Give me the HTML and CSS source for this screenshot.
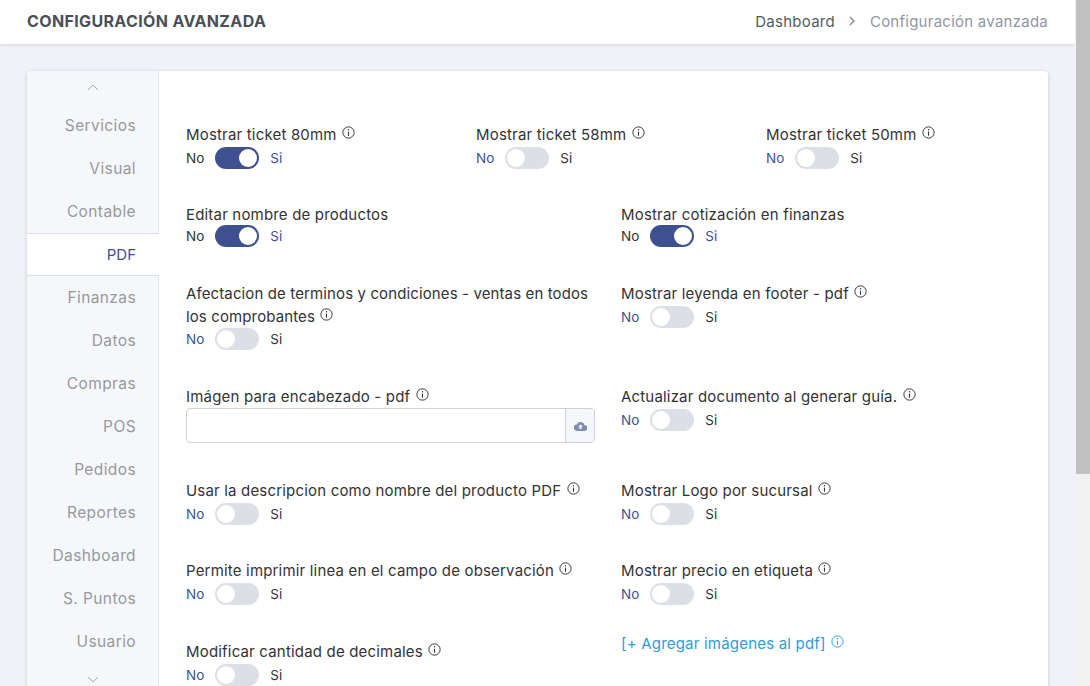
FILE: index.html
```html
<!DOCTYPE html>
<html lang="es">
    <head>
        <meta charset="UTF-8" />
        <meta name="viewport" content="width=device-width, initial-scale=1.0" />
        <title>Configuración avanzada</title>
        <link rel="stylesheet" href="styles.css">
    </head>
    <body>
        <svg class="defs" width="0" height="0">
            <symbol id="info" viewBox="0 0 12 12">
                <circle cx="6" cy="6" r="5.2" fill="none" stroke="currentColor" stroke-width="0.9"></circle>
                <path d="M6 5.2V9" fill="none" stroke="currentColor" stroke-width="1"></path>
                <circle cx="6" cy="3.4" r=".7" fill="currentColor"></circle>
            </symbol>
        </svg>
        <div class="page">
            <header class="topbar">
                <h1 class="title">CONFIGURACIÓN AVANZADA</h1>
                <nav class="crumbs">
                    <span>Dashboard</span>
                    <svg class="crumb-sep" viewBox="0 0 8 10" width="8" height="10"><path d="M2 1l4 4-4 4" fill="none" stroke="currentColor" stroke-width="1.2"></path></svg>
                    <span class="crumb-current">Configuración avanzada</span>
                </nav>
            </header>
            <main class="content">
                <section class="card">
                    <aside class="tabs">
                        <div class="tab-arrow"><svg viewBox="0 0 12 7" width="12" height="7"><path d="M1 6l5-5 5 5" fill="none" stroke="currentColor"></path></svg></div>
                        <div class="tab">Servicios</div>
                        <div class="tab">Visual</div>
                        <div class="tab">Contable</div>
                        <div class="tab active">PDF</div>
                        <div class="tab">Finanzas</div>
                        <div class="tab">Datos</div>
                        <div class="tab">Compras</div>
                        <div class="tab">POS</div>
                        <div class="tab">Pedidos</div>
                        <div class="tab">Reportes</div>
                        <div class="tab">Dashboard</div>
                        <div class="tab">S. Puntos</div>
                        <div class="tab">Usuario</div>
                        <div class="tab-arrow"><svg viewBox="0 0 12 7" width="12" height="7"><path d="M1 1l5 5 5-5" fill="none" stroke="currentColor"></path></svg></div>
                    </aside>
                    <div class="panel">
                        <div class="row thirds">
                            <div class="field">
                                <label class="label">Mostrar ticket 80mm <svg class="info"><use href="#info"></use></svg></label>
                                <div class="switch on"><span class="side">No</span><span class="track"></span><span class="side">Si</span></div>
                            </div>
                            <div class="field">
                                <label class="label">Mostrar ticket 58mm <svg class="info"><use href="#info"></use></svg></label>
                                <div class="switch"><span class="side">No</span><span class="track"></span><span class="side">Si</span></div>
                            </div>
                            <div class="field">
                                <label class="label">Mostrar ticket 50mm <svg class="info"><use href="#info"></use></svg></label>
                                <div class="switch"><span class="side">No</span><span class="track"></span><span class="side">Si</span></div>
                            </div>
                        </div>
                        <div class="row halves">
                            <div class="field">
                                <label class="label">Editar nombre de productos</label>
                                <div class="switch on"><span class="side">No</span><span class="track"></span><span class="side">Si</span></div>
                            </div>
                            <div class="field">
                                <label class="label">Mostrar cotización en finanzas</label>
                                <div class="switch on"><span class="side">No</span><span class="track"></span><span class="side">Si</span></div>
                            </div>
                        </div>
                        <div class="row halves">
                            <div class="field">
                                <label class="label wrap">Afectacion de terminos y condiciones - ventas en todos los comprobantes <svg class="info"><use href="#info"></use></svg></label>
                                <div class="switch"><span class="side">No</span><span class="track"></span><span class="side">Si</span></div>
                            </div>
                            <div class="field">
                                <label class="label">Mostrar leyenda en footer - pdf <svg class="info"><use href="#info"></use></svg></label>
                                <div class="switch"><span class="side">No</span><span class="track"></span><span class="side">Si</span></div>
                            </div>
                        </div>
                        <div class="row halves">
                            <div class="field">
                                <label class="label">Imágen para encabezado - pdf <svg class="info"><use href="#info"></use></svg></label>
                                <div class="upload">
                                    <div class="upload-input"></div>
                                    <div class="upload-btn">
                                        <svg viewBox="0 0 16 12" width="13" height="10"><path d="M13 5.1A5 5 0 0 0 3.6 4 4 4 0 0 0 4 12h8.8a3.4 3.4 0 0 0 .2-6.9zM9.3 7v2.6H6.7V7H5l3-3 3 3z" fill="currentColor"></path></svg>
                                    </div>
                                </div>
                            </div>
                            <div class="field">
                                <label class="label">Actualizar documento al generar guía. <svg class="info"><use href="#info"></use></svg></label>
                                <div class="switch"><span class="side">No</span><span class="track"></span><span class="side">Si</span></div>
                            </div>
                        </div>
                        <div class="row halves">
                            <div class="field">
                                <label class="label">Usar la descripcion como nombre del producto PDF <svg class="info"><use href="#info"></use></svg></label>
                                <div class="switch"><span class="side">No</span><span class="track"></span><span class="side">Si</span></div>
                            </div>
                            <div class="field">
                                <label class="label">Mostrar Logo por sucursal <svg class="info"><use href="#info"></use></svg></label>
                                <div class="switch"><span class="side">No</span><span class="track"></span><span class="side">Si</span></div>
                            </div>
                        </div>
                        <div class="row halves">
                            <div class="field">
                                <label class="label">Permite imprimir linea en el campo de observación <svg class="info"><use href="#info"></use></svg></label>
                                <div class="switch"><span class="side">No</span><span class="track"></span><span class="side">Si</span></div>
                            </div>
                            <div class="field">
                                <label class="label">Mostrar precio en etiqueta <svg class="info"><use href="#info"></use></svg></label>
                                <div class="switch"><span class="side">No</span><span class="track"></span><span class="side">Si</span></div>
                            </div>
                        </div>
                        <div class="row halves">
                            <div class="field">
                                <label class="label">Modificar cantidad de decimales <svg class="info"><use href="#info"></use></svg></label>
                                <div class="switch"><span class="side">No</span><span class="track"></span><span class="side">Si</span></div>
                            </div>
                            <div class="field">
                                <a class="add-link">[+ Agregar imágenes al pdf] <svg class="info"><use href="#info"></use></svg></a>
                            </div>
                        </div>
                    </div>
                </section>
            </main>
        </div>
        <div class="scrollbar"><div class="scroll-thumb"></div></div>
    </body>
</html>
```

FILE: styles.css
```css
html {
    height: 100%;
    overflow: hidden;
}
body {
    margin: 0;
    height: 100%;
    display: flex;
    overflow: hidden;
    font-family: Inter, "Liberation Sans", sans-serif;
    font-size: 15px;
    color: #333;
    background: #f1f2f8;
}
.defs {
    position: absolute;
}
.page {
    flex: 1;
    min-width: 0;
    height: 100%;
    overflow: hidden;
}
.scrollbar {
    width: 15px;
    height: 100%;
    background: #f1f1f1;
}
.scroll-thumb {
    height: 474px;
    margin-left: 1px;
    background: #c1c1c1;
}
.topbar {
    height: 44px;
    padding: 0 27px 2px;
    box-sizing: border-box;
    display: flex;
    align-items: center;
    justify-content: space-between;
    background: #fff;
    box-shadow: 0 1px 3px #0000001f;
}
.title {
    margin: 0;
    font-size: 16px;
    font-weight: 700;
    color: #4a5056;
    letter-spacing: 0.36px;
}
.crumbs {
    display: flex;
    align-items: center;
    color: #555b63;
    letter-spacing: 0.25px;
}
.crumb-sep {
    margin: 0 13.5px;
    color: #7d838b;
}
.crumb-current {
    color: #9297a0;
}
.content {
    padding: 27px 27px 0;
}
.card {
    display: flex;
    background: #fff;
    border-radius: 4px;
    box-shadow: 0 1px 4px #0000002b;
    min-height: 700px;
}
.tabs {
    width: 131px;
    flex: none;
    background: #f5f7fa;
    border-right: 1px solid #e4e7ed;
    border-radius: 4px 0 0 4px;
    font-size: 15.5px;
    color: #97999e;
}
.tab-arrow {
    height: 33px;
    display: flex;
    align-items: center;
    justify-content: center;
    color: #a5a8ad;
}
.tab {
    height: 43px;
    line-height: 43px;
    text-align: right;
    padding-right: 22px;
    letter-spacing: 0.4px;
}
.tab.active {
    line-height: 41px;
    margin-right: -1px;
    padding-right: 23px;
    font-size: 15px;
    letter-spacing: 0;
    color: #3f5090;
    background: #fff;
    border-top: 1px solid #d5dde8;
    border-bottom: 1px solid #d5dde8;
    box-sizing: border-box;
}
.panel {
    flex: 1;
    min-width: 0;
    padding: 52px 7px 0 12px;
}
.row {
    display: grid;
    margin-bottom: 33px;
}
.thirds {
    grid-template-columns: repeat(3, 1fr);
}
.halves {
    grid-template-columns: repeat(2, 1fr);
}
.field {
    padding: 0 15px;
}
.label {
    display: block;
    line-height: 21px;
    letter-spacing: 0.18px;
    color: #333;
}
.label:has(.info) {
    line-height: 23.5px;
}
.label.wrap {
    line-height: 23px;
    letter-spacing: 0.12px;
}
.info {
    width: 13px;
    height: 13px;
    margin-left: 1px;
    vertical-align: 1px;
    color: #333;
}
.switch {
    display: flex;
    align-items: center;
    height: 24px;
    margin: -0.5px 0 0.5px;
    font-size: 13.5px;
}
.side {
    color: #3f5090;
}
.switch .side:last-child {
    color: #333;
}
.switch.on .side:first-child {
    color: #333;
}
.switch.on .side:last-child {
    color: #3f5090;
}
.track {
    position: relative;
    width: 44px;
    height: 22px;
    margin: 0 11px;
    border-radius: 11px;
    background: #dcdfe6;
}
.track::after {
    content: "";
    position: absolute;
    top: 2px;
    left: 2px;
    width: 18px;
    height: 18px;
    border-radius: 50%;
    background: #fff;
}
.switch.on .track {
    background: #3f5090;
}
.switch.on .track::after {
    left: 24px;
}
.upload {
    display: flex;
    height: 35px;
    margin: 0 -4px 2.5px 0;
    box-sizing: border-box;
    border: 1px solid #ccd2da;
    border-radius: 4px;
    overflow: hidden;
}
.upload-input {
    flex: 1;
}
.upload-btn {
    width: 28px;
    display: flex;
    align-items: center;
    justify-content: center;
    background: #f5f7fa;
    border-left: 1px solid #ccd2da;
    color: #7f8caf;
}
.add-link {
    display: block;
    line-height: 23.5px;
    margin-top: -8px;
    letter-spacing: 0.2px;
    color: #2d9bdc;
}
.add-link .info {
    color: #2d9bdc;
}
```
